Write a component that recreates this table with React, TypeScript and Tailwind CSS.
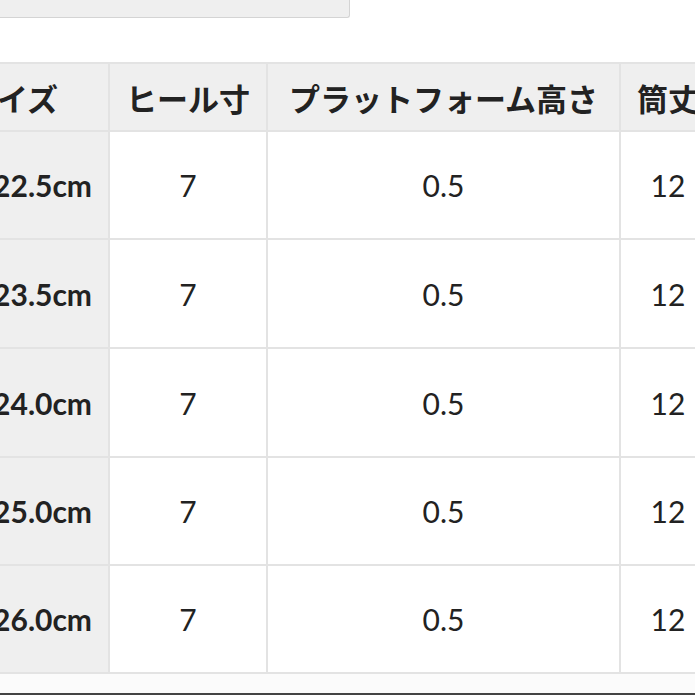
import * as React from "react";

const sizes = ["22.5cm", "23.5cm", "24.0cm", "25.0cm", "26.0cm"];

const headers = ["サイズ", "ヒール寸", "プラットフォーム高さ", "筒丈"];

export default function App() {
  return (
    <div className="relative w-[695px] h-[695px] overflow-hidden bg-white text-[#222]">
      {/* select box above the table */}
      <div className="w-[350px] h-[18px] bg-[#efefef] border-r border-b border-[#d4d4d4] rounded-br-[3px]" />

      {/* size table */}
      <div className="mt-[44px] ml-[-40px] w-[760px] grid grid-cols-[146px_156px_351px_94px] grid-rows-[66px_106px_107px_107px_106px_106px] gap-[2px] p-[2px] bg-[#e3e3e3]">
        {headers.map((h, i) => (
          <div
            key={h}
            className={
              i === 0
                ? "flex items-center justify-end pr-[50px] bg-[#efefef] font-['Noto_Sans_CJK_JP',sans-serif] font-bold text-[31px] leading-none whitespace-nowrap"
                : "flex items-center justify-center bg-[#efefef] font-['Noto_Sans_CJK_JP',sans-serif] font-bold text-[31px] leading-none whitespace-nowrap"
            }
          >
            {h}
          </div>
        ))}
        {sizes.map((s) => (
          <React.Fragment key={s}>
            <div className="flex items-center justify-end pr-[16px] bg-[#efefef] font-['Lato',sans-serif] font-bold text-[30px] leading-none">
              {s}
            </div>
            <div className="flex items-center justify-center bg-white font-['Lato',sans-serif] text-[30px] leading-none">
              7
            </div>
            <div className="flex items-center justify-center bg-white font-['Lato',sans-serif] text-[30px] leading-none">
              0.5
            </div>
            <div className="flex items-center justify-center bg-white font-['Lato',sans-serif] text-[30px] leading-none">
              12
            </div>
          </React.Fragment>
        ))}
      </div>

      <div className="h-[19px] bg-[#fbfbfb]" />
      <div className="h-[3px] bg-[#444]" />
    </div>
  );
}
